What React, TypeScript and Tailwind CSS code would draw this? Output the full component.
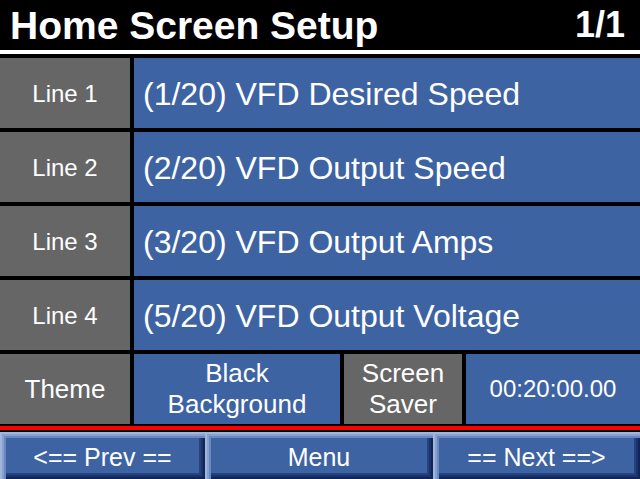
import React from 'react'

const lines = [
  { label: 'Line 1', value: '(1/20) VFD Desired Speed' },
  { label: 'Line 2', value: '(2/20) VFD Output Speed' },
  { label: 'Line 3', value: '(3/20) VFD Output Amps' },
  { label: 'Line 4', value: '(5/20) VFD Output Voltage' },
]

// raised button with stepped bevel edges
const bevel =
  'shadow-[inset_2px_2px_0_#a2b6dc,inset_4px_4px_0_#86a0d0,inset_6px_6px_0_#6a88c0,inset_-2px_-2px_0_#0f2658,inset_-4px_-4px_0_#1a336c,inset_-6px_-6px_0_#26427f]'

function NavButton({ label, className }: { label: string; className: string }) {
  return (
    <button
      className={`${className} h-full bg-[#3e63a3] ${bevel} flex items-center justify-center text-white text-[25px] leading-none pt-[3px]`}
    >
      {label}
    </button>
  )
}

export default function App() {
  return (
    <div className="w-[640px] h-[479px] bg-black flex flex-col overflow-hidden font-['Liberation_Sans',Arial,sans-serif] text-white">
      {/* Title bar */}
      <div className="h-[50px] flex items-center justify-between pl-[10px] pr-[15px]">
        <span className="text-[39px] font-bold leading-none">Home Screen Setup</span>
        <span className="text-[36px] font-bold leading-none">1/1</span>
      </div>
      <div className="h-[4px] bg-white" />

      {/* Setup rows */}
      <div className="flex flex-col gap-[4px] pt-[4px]">
        {lines.map((line) => (
          <div key={line.label} className="h-[70px] flex gap-[4px]">
            <div className="w-[130px] bg-[#666666] flex items-center justify-center text-[24px] pt-[2px]">
              {line.label}
            </div>
            <div className="flex-1 bg-[#3e63a3] flex items-center pl-[9px] text-[32px] pt-[2px]">
              {line.value}
            </div>
          </div>
        ))}

        {/* Theme row */}
        <div className="h-[70px] flex gap-[4px]">
          <div className="w-[130px] bg-[#666666] flex items-center justify-center text-[26px]">
            Theme
          </div>
          <div className="w-[206px] bg-[#3e63a3] flex flex-col items-center justify-center text-[26px] leading-[31px]">
            <span>Black</span>
            <span>Background</span>
          </div>
          <div className="w-[118px] bg-[#666666] flex flex-col items-center justify-center text-[26px] leading-[31px]">
            <span>Screen</span>
            <span>Saver</span>
          </div>
          <div className="flex-1 bg-[#3e63a3] flex items-center justify-center text-[24px]">
            00:20:00.00
          </div>
        </div>
      </div>

      {/* Red divider */}
      <div className="mt-[2px] h-[4px] bg-[#ff0000]" />
      <div className="h-[2px]" />

      {/* Navigation */}
      <div className="flex-1 flex">
        <NavButton label="<== Prev ==" className="w-[205px]" />
        <NavButton label="Menu" className="w-[228px]" />
        <NavButton label="== Next ==>" className="flex-1" />
      </div>
    </div>
  )
}
